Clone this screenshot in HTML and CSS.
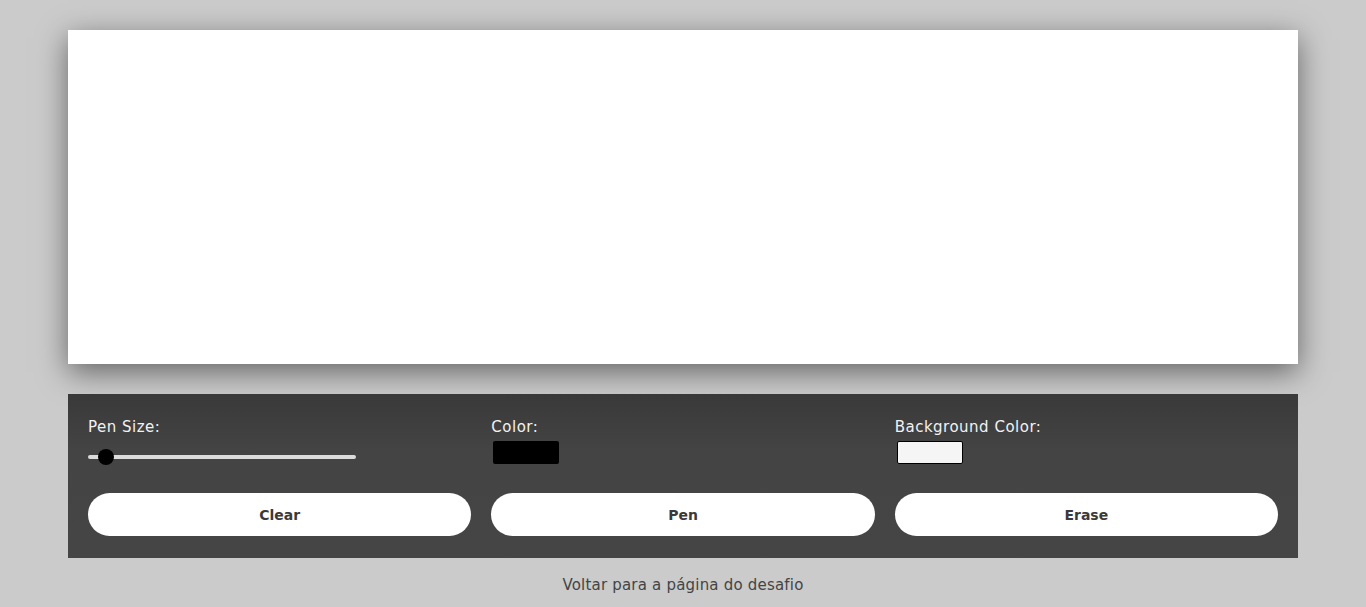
FILE: index.html
```html
<!DOCTYPE html>
<html lang="pt-BR">
<head>
<meta charset="utf-8">
<title>Drawing App</title>
<link rel="stylesheet" href="styles.css">
</head>
<body>
<main class="app">
  <div class="canvas"></div>
  <section class="toolbox">
    <div class="tool">
      <label class="label">Pen Size:</label>
      <div class="range">
        <div class="range-track"></div>
        <div class="range-thumb"></div>
      </div>
    </div>
    <div class="tool">
      <label class="label">Color:</label>
      <div class="swatch swatch-pen"></div>
    </div>
    <div class="tool">
      <label class="label">Background Color:</label>
      <div class="swatch swatch-bg"></div>
    </div>
    <button class="btn">Clear</button>
    <button class="btn">Pen</button>
    <button class="btn">Erase</button>
  </section>
  <a class="back" href="#">Voltar para a página do desafio</a>
</main>
</body>
</html>
```
FILE: styles.css
```css
html, body {
  margin: 0;
  padding: 0;
}
body {
  background: #cbcbcb;
  font-family: "DejaVu Sans", Inter, sans-serif;
  height: 607px;
  overflow: hidden;
}
.app {
  width: 1230px;
  margin: 0 auto;
  padding-top: 30px;
  display: flex;
  flex-direction: column;
}
.canvas {
  height: 334px;
  background: #fff;
  box-shadow: 0 8px 28px rgba(0, 0, 0, 0.5);
}
.toolbox {
  margin-top: 30px;
  height: 164px;
  box-sizing: border-box;
  padding: 23px 20px 22px;
  background: linear-gradient(to bottom, #393939, #444444 35%, #454545);
  display: grid;
  grid-template-columns: 1fr 1fr 1fr;
  column-gap: 20px;
  row-gap: 0;
  grid-template-rows: 76px 43px;
}
.tool {
  display: flex;
  flex-direction: column;
  align-items: flex-start;
}
.label {
  color: #f2f2f2;
  font-size: 15px;
  letter-spacing: 0.5px;
  line-height: 20px;
}
.range {
  position: relative;
  width: 268px;
  height: 16px;
  margin-top: 12px;
}
.range-track {
  position: absolute;
  left: 0;
  right: 0;
  top: 6px;
  height: 4px;
  border-radius: 2px;
  background: #dcdcdc;
}
.range-thumb {
  position: absolute;
  left: 10px;
  top: 0;
  width: 16px;
  height: 16px;
  border-radius: 50%;
  background: #000;
}
.swatch {
  margin-top: 4px;
  width: 66px;
  height: 23px;
  box-sizing: border-box;
  border-radius: 2px;
}
.swatch-pen {
  background: #000;
  margin-left: 2px;
}
.swatch-bg {
  background: #f5f5f5;
  border: 1px solid #000;
  margin-left: 2px;
}
.btn {
  height: 43px;
  border: none;
  border-radius: 22px;
  background: #fff;
  color: #3a3a3a;
  font-family: inherit;
  font-size: 14px;
  font-weight: 700;
  cursor: pointer;
}
.back {
  margin-top: 17px;
  align-self: center;
  color: #444;
  font-size: 15px;
  letter-spacing: 0.2px;
  line-height: 20px;
  text-decoration: none;
}
```
